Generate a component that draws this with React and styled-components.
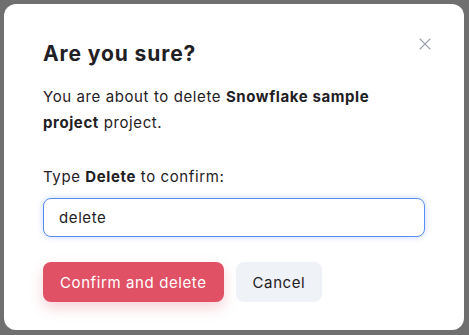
import React, { useState } from 'react'
import styled, { createGlobalStyle } from 'styled-components'

const GlobalStyle = createGlobalStyle`
  html, body {
    margin: 0;
    padding: 0;
    background: #6f6f6f;
  }
  body {
    font-family: Inter, "Noto Sans", sans-serif;
    color: #1f2024;
  }
`

const App = () => {
  const [value, setValue] = useState('delete')

  return (
    <Backdrop>
      <GlobalStyle />
      <Modal>
        <CloseButton aria-label="Close">
          <svg width="12" height="12" viewBox="0 0 12 12">
            <path d="M1 1 L11 11 M11 1 L1 11" stroke="#9ea3ae" strokeWidth="1.1" strokeLinecap="round" />
          </svg>
        </CloseButton>
        <Title>Are you sure?</Title>
        <Text>
          You are about to delete <b>Snowflake sample project</b> project.
        </Text>
        <Label>
          Type <b>Delete</b> to confirm:
        </Label>
        <Input value={ value } onChange={ e => setValue(e.target.value) } />
        <Actions>
          <Button variant="danger">Confirm and delete</Button>
          <Button>Cancel</Button>
        </Actions>
      </Modal>
    </Backdrop>
  )
}

export default App

const Backdrop = styled.div`
  height: 335px;
  padding: 4px;
  box-sizing: border-box;
`

const Modal = styled.div`
  position: relative;
  width: 460px;
  height: 326px;
  box-sizing: border-box;
  background: #fff;
  border-radius: 12px;
  padding: 36px 39px 0;
  display: flex;
  flex-direction: column;
  letter-spacing: 0.6px;
`

const CloseButton = styled.button`
  position: absolute;
  top: 34px;
  right: 33px;
  width: 12px;
  height: 12px;
  padding: 0;
  border: none;
  background: none;
  display: flex;
  cursor: pointer;
`

const Title = styled.h2`
  margin: 0;
  font-size: 21px;
  line-height: 28px;
  font-weight: 700;
  letter-spacing: 0.9px;
`

const Text = styled.p`
  margin: 16px 0 0;
  font-size: 15px;
  line-height: 26px;
  b {
    font-weight: 700;
  }
`

const Label = styled.p`
  margin: 30px 0 0;
  font-size: 15px;
  line-height: 22px;
  b {
    font-weight: 700;
  }
`

const Input = styled.input`
  margin-top: 10px;
  height: 39px;
  box-sizing: border-box;
  width: 100%;
  border: 1px solid #5b8def;
  border-radius: 8px;
  padding: 0 15px;
  font-family: inherit;
  font-size: 15px;
  letter-spacing: 0.6px;
  color: #1f2024;
  outline: none;
  box-shadow: 0 0 6px rgba(91, 141, 239, 0.35);
`

const Actions = styled.div`
  display: flex;
  gap: 12px;
  margin-top: 25px;
`

const Button = styled.button`
  height: 40px;
  padding: 0 17px;
  border: none;
  border-radius: 8px;
  font-family: inherit;
  font-size: 15px;
  letter-spacing: 0.6px;
  cursor: pointer;
  color: ${ p => p.variant === 'danger' ? '#fff' : '#1f2024' };
  background: ${ p => p.variant === 'danger' ? '#e05166' : '#eff2f6' };
  box-shadow: ${ p => p.variant === 'danger' ? '0 6px 14px rgba(224, 81, 102, 0.25)' : 'none' };
`
